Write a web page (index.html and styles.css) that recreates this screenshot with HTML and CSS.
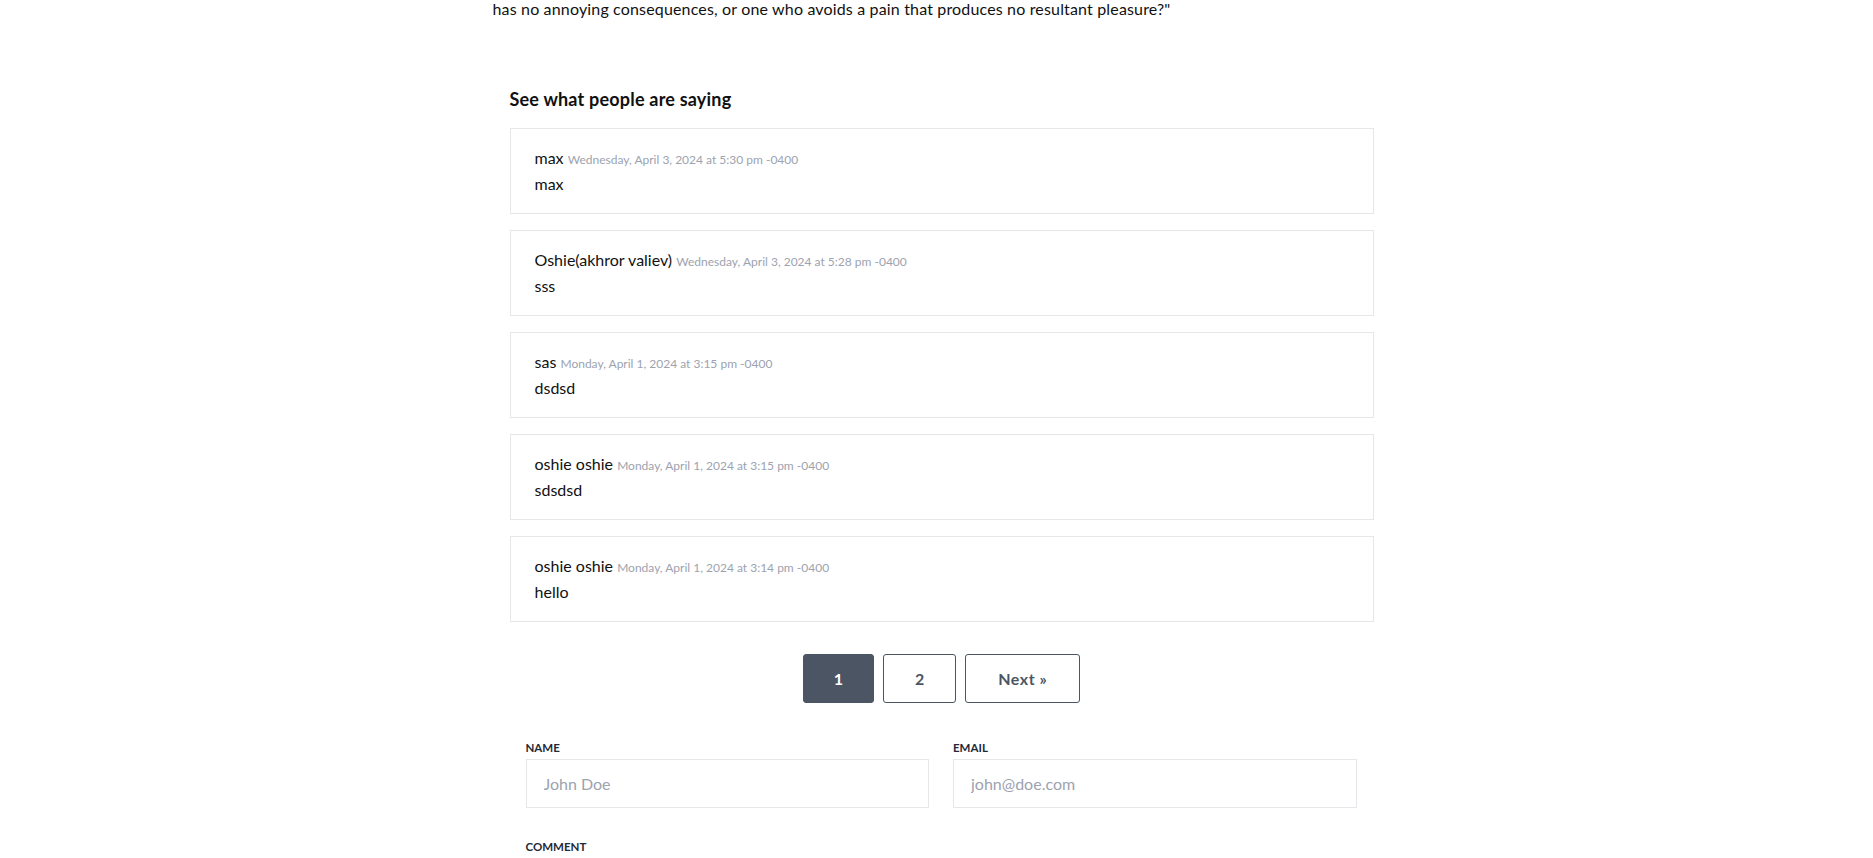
FILE: index.html
```html
<!DOCTYPE html>
<html lang="en">
<head>
<meta charset="utf-8">
<title>Comments</title>
<link rel="stylesheet" href="styles.css">
</head>
<body>
<div class="page">
  <p class="intro">has no annoying consequences, or one who avoids a pain that produces no resultant pleasure?"</p>
  <section class="comments">
    <h3 class="comments-title">See what people are saying</h3>
    <ul class="comment-list">
      <li class="comment">
        <div class="comment-meta"><span class="author">max</span> <span class="date">Wednesday, April 3, 2024 at 5:30 pm -0400</span></div>
        <div class="comment-body">max</div>
      </li>
      <li class="comment">
        <div class="comment-meta"><span class="author">Oshie(akhror valiev)</span> <span class="date">Wednesday, April 3, 2024 at 5:28 pm -0400</span></div>
        <div class="comment-body">sss</div>
      </li>
      <li class="comment">
        <div class="comment-meta"><span class="author">sas</span> <span class="date">Monday, April 1, 2024 at 3:15 pm -0400</span></div>
        <div class="comment-body">dsdsd</div>
      </li>
      <li class="comment">
        <div class="comment-meta"><span class="author">oshie oshie</span> <span class="date">Monday, April 1, 2024 at 3:15 pm -0400</span></div>
        <div class="comment-body">sdsdsd</div>
      </li>
      <li class="comment">
        <div class="comment-meta"><span class="author">oshie oshie</span> <span class="date">Monday, April 1, 2024 at 3:14 pm -0400</span></div>
        <div class="comment-body">hello</div>
      </li>
    </ul>
    <nav class="pagination">
      <span class="page-btn active">1</span>
      <a class="page-btn page-two" href="#">2</a>
      <a class="page-btn page-next" href="#">Next »</a>
    </nav>
    <form class="comment-form">
      <div class="form-row">
        <div class="field">
          <label class="field-label" for="name">Name</label>
          <input class="field-input" id="name" type="text" placeholder="John Doe">
        </div>
        <div class="field">
          <label class="field-label" for="email">Email</label>
          <input class="field-input" id="email" type="email" placeholder="john@doe.com">
        </div>
      </div>
      <div class="field field-full">
        <label class="field-label" for="comment">Comment</label>
        <textarea class="field-input field-textarea" id="comment"></textarea>
      </div>
    </form>
  </section>
</div>
</body>
</html>
```
FILE: styles.css
```css
html, body {
  margin: 0;
  padding: 0;
  overflow: hidden;
  background: #ffffff;
}

body {
  font-family: "Lato", "Open Sans", sans-serif;
  color: #111111;
}

.page {
  width: 888px;
  margin: 0 auto;
}

.intro {
  margin: 0;
  font-size: 16px;
  line-height: 18px;
  letter-spacing: 0.16px;
  color: #111111;
}

.comments {
  margin-left: 17px;
  width: 864px;
}

.comments-title {
  margin: 69px 0 17px;
  font-size: 18px;
  line-height: 24px;
  font-weight: 700;
  letter-spacing: 0.2px;
  color: #111111;
}

.comment-list {
  list-style: none;
  margin: 0;
  padding: 0;
  display: flex;
  flex-direction: column;
  gap: 16px;
}

.comment {
  border: 1px solid #e5e7eb;
  padding: 16px 24px;
}

.comment-meta,
.comment-body {
  font-size: 16px;
  line-height: 26px;
  height: 26px;
}

.author {
  color: #111111;
}

.date {
  font-size: 12px;
  line-height: 14px;
  color: #9ca3af;
}

.pagination {
  display: flex;
  justify-content: center;
  gap: 9px;
  margin-top: 32px;
}

.page-btn {
  display: block;
  border: 1px solid #4b5563;
  border-radius: 3px;
  padding: 13px 30px;
  font-size: 16px;
  line-height: 21px;
  font-weight: 700;
  color: #4b5563;
  text-decoration: none;
}

.page-two {
  padding: 13px 31px;
}

.page-next {
  padding: 13px 32px;
  letter-spacing: 0.5px;
}

.page-btn.active {
  background: #4b5563;
  color: #ffffff;
}

.comment-form {
  margin-top: 37px;
  padding: 0 17px 0 16px;
}

.form-row {
  display: grid;
  grid-template-columns: 1fr 1fr;
  gap: 24px;
}

.field {
  display: flex;
  flex-direction: column;
  gap: 3px;
}

.field-full {
  margin-top: 31px;
}

.field-label {
  font-size: 11.5px;
  line-height: 16px;
  font-weight: 700;
  text-transform: uppercase;
  color: #1f2937;
}

.field-input {
  box-sizing: border-box;
  height: 49px;
  border: 1px solid #e5e7eb;
  border-radius: 0;
  padding: 0 17px;
  font-family: inherit;
  font-size: 16px;
  color: #111111;
  outline: none;
}

.field-input::placeholder {
  color: #9ca3af;
}

.field-textarea {
  height: 140px;
  padding-top: 12px;
  resize: none;
}
```
